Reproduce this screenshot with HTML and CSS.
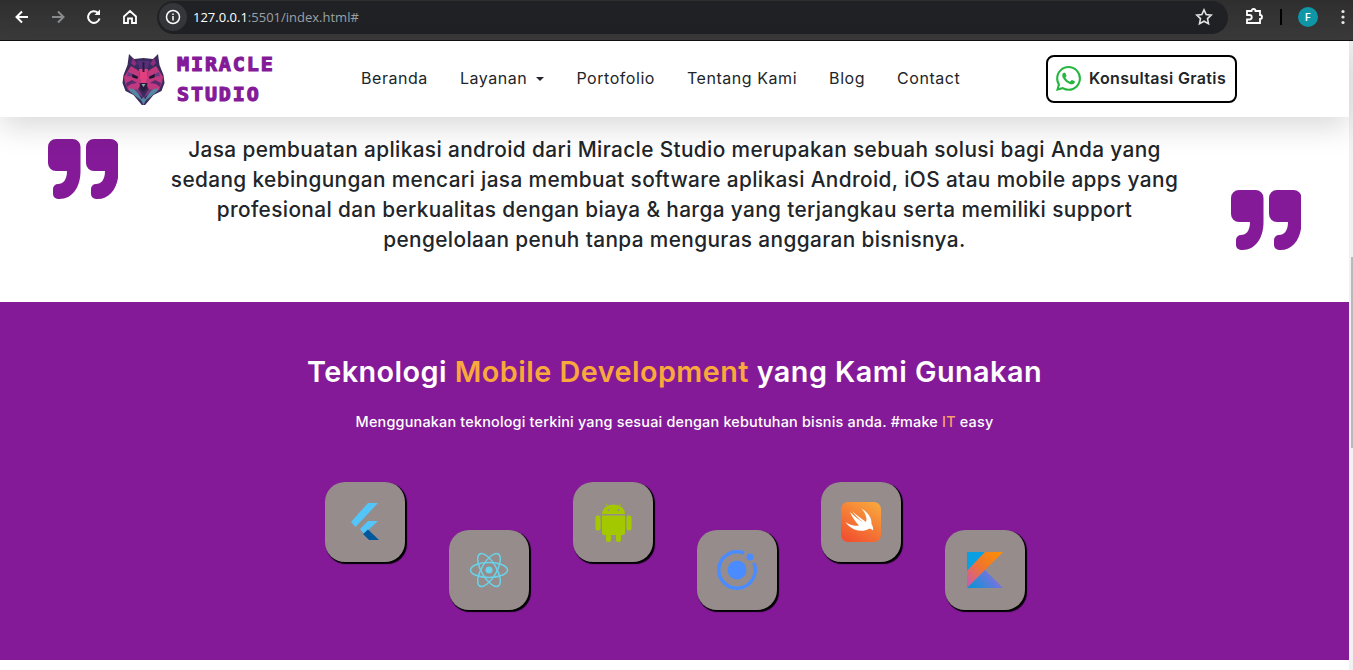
FILE: index.html
```html
<!DOCTYPE html>
<html lang="en">
<head>
    <meta charset="UTF-8">
    <meta name="viewport" content="width=device-width, initial-scale=1.0">
    <title>Miracle Studio</title>
    <link rel="stylesheet" href="styles.css">
</head>
<body>
    <!-- browser toolbar -->
    <div class="browser-bar">
        <svg class="tool" viewBox="0 0 20 20"><path d="M16 10H5M10 4.5 4.5 10l5.500 5.500" fill="none" stroke="#fff" stroke-width="2"/></svg>
        <svg class="tool" viewBox="0 0 20 20"><path d="M4 10h11M10 4.500 15.500 10 10 15.500" fill="none" stroke="#8a8b8d" stroke-width="2"/></svg>
        <svg class="tool" viewBox="0 0 20 20"><path d="M15.500 11.500A5.800 5.800 0 1 1 14 6" fill="none" stroke="#fff" stroke-width="2"/><path d="M16 2.500V8h-5.500z" fill="#fff"/></svg>
        <svg class="tool" viewBox="0 0 20 20"><path d="M4 9.500 10 4l6 5.500V16h-4v-4.500H8V16H4z" fill="none" stroke="#fff" stroke-width="1.800"/></svg>
        <div class="url-pill">
            <span class="info-btn"><svg viewBox="0 0 16 16" width="16" height="16"><circle cx="8" cy="8" r="6.500" fill="none" stroke="#fff" stroke-width="1.500"/><path d="M8 7v4.500M8 4.400v1.500" stroke="#fff" stroke-width="1.500"/></svg></span>
            <span class="url"><b>127.0.0.1</b>:5501/index.html#</span>
            <svg class="star" viewBox="0 0 20 20"><path d="m10 2.800 2.200 4.700 5 .6-3.700 3.500 1 5.100L10 14.200l-4.500 2.500 1-5.100L2.800 8.100l5-.6z" fill="none" stroke="#e3e3e3" stroke-width="1.600"/></svg>
        </div>
        <svg class="puzzle" viewBox="0 0 20 20"><path d="M3 5h4.500a2 2 0 0 1 4 0H16v4a2 2 0 0 1 0 4v4H3v-3.500h2.500a1.700 1.700 0 0 0 0-4.500H3z" transform="translate(0 -1)" fill="none" stroke="#fff" stroke-width="1.800"/></svg>
        <span class="divider"></span>
        <span class="avatar">F</span>
        <svg class="dots" viewBox="0 0 4 16"><circle cx="2" cy="2.500" r="1.600"/><circle cx="2" cy="8" r="1.600"/><circle cx="2" cy="13.500" r="1.600"/></svg>
    </div>

    <div class="viewport">
        <div class="page">
            <nav class="navbar">
                <a class="brand" href="#">
                    <svg class="wolf" viewBox="0 0 43 52">
                        <path d="M7 1l5 5 9.500-1L31 6l5-5 1.500 11 4 10 1 8-3 8-8 4-10 12-10-12-8-4-3-8 1-8 4-10z" fill="#3a2a5e"/>
                        <path d="M2 24l7-11 8 5 2 13-5 9-8-3-3-7z" fill="#c0397f"/>
                        <path d="M41 24l-7-11-8 5-2 13 5 9 8-3 3-7z" fill="#c0397f"/>
                        <path d="M4 30l6-3 5 3-6 1-4 3zM39 30l-6-3-5 3 6 1 4 3z" fill="#5b2a6e"/>
                        <path d="M6 19l7 3-1 2-7-1zM37 19l-7 3 1 2 7-1z" fill="#6b3a86"/>
                        <path d="M11 5l4 6-3 2-3-3zM32 5l-4 6 3 2 3-3z" fill="#8a2f7e"/>
                        <path d="M15 8h13l-3 8h-7z" fill="#56307c"/>
                        <path d="M17 16h9l-1.500 14h-6z" fill="#e0407f"/>
                        <path d="M20.500 9h2v10h-2z" fill="#2a1c3c"/>
                        <path d="M10 21l6 2.500-.5 2.500-5-1.500zM33 21l-6 2.500.5 2.500 5-1.500z" fill="#1f1530"/>
                        <path d="M7 35l7 2 7.500 12-8-6-6-5zM36 35l-7 2-7.500 12 8-6 6-5z" fill="#5488a2"/>
                        <path d="M12 36l5 1 4.500 8-5-4zM31 36l-5 1-4.500 8 5-4z" fill="#7a3a7e"/>
                        <path d="M17.500 30h8l-1 6-3 3-3-3z" fill="#2a1c3c"/>
                        <path d="M19.500 31h4l-2 3z" fill="#9aa3b5"/>
                        <path d="M21.500 52l-2.500-5 2.500-3 2.500 3z" fill="#5488a2"/>
                    </svg>
                    <span class="brand-name">MIRACLE<br>STUDIO</span>
                </a>
                <ul class="nav-links">
                    <li><a href="#">Beranda</a></li>
                    <li><a href="#">Layanan <span class="caret"></span></a></li>
                    <li><a href="#">Portofolio</a></li>
                    <li><a href="#">Tentang Kami</a></li>
                    <li><a href="#">Blog</a></li>
                    <li><a href="#">Contact</a></li>
                </ul>
                <a class="btn-consult" href="#">
                    <svg viewBox="0 0 24 24" width="25" height="25"><path fill="#25b63f" d="M17.472 14.382c-.297-.149-1.758-.867-2.030-.967-.273-.099-.471-.148-.67.150-.197.297-.767.966-.940 1.164-.173.199-.347.223-.644.075-.297-.150-1.255-.463-2.390-1.475-.883-.788-1.480-1.761-1.653-2.059-.173-.297-.018-.458.130-.606.134-.133.298-.347.446-.520.149-.174.198-.298.298-.497.099-.198.050-.371-.025-.520-.075-.149-.669-1.612-.916-2.207-.242-.579-.487-.500-.669-.510-.173-.008-.371-.010-.570-.010-.198 0-.520.074-.792.372-.272.297-1.040 1.016-1.040 2.479 0 1.462 1.065 2.875 1.213 3.074.149.198 2.096 3.200 5.077 4.487.709.306 1.262.489 1.694.625.712.227 1.360.195 1.871.118.571-.085 1.758-.719 2.006-1.413.248-.694.248-1.289.173-1.413-.074-.124-.272-.198-.570-.347m-5.421 7.403h-.004a9.870 9.870 0 01-5.031-1.378l-.361-.214-3.741.982.998-3.648-.235-.374a9.860 9.860 0 01-1.510-5.260c.001-5.450 4.436-9.884 9.888-9.884 2.640 0 5.122 1.030 6.988 2.898a9.825 9.825 0 012.893 6.994c-.003 5.450-4.437 9.884-9.885 9.884m8.413-18.297A11.815 11.815 0 0012.050 0C5.495 0 .160 5.335.157 11.892c0 2.096.547 4.142 1.588 5.945L.057 24l6.305-1.654a11.882 11.882 0 005.683 1.448h.005c6.554 0 11.890-5.335 11.893-11.893a11.821 11.821 0 00-3.480-8.413z"/></svg>
                    Konsultasi Gratis
                </a>
            </nav>

            <section class="quote">
                <svg class="quote-mark" viewBox="0 0 70 60"><use href="#quote-glyph"/><use href="#quote-glyph" x="38"/></svg>
                <p>Jasa pembuatan aplikasi android dari Miracle Studio merupakan sebuah solusi bagi Anda yang<br>
                sedang kebingungan mencari jasa membuat software aplikasi Android, iOS atau mobile apps yang<br>
                profesional dan berkualitas dengan biaya &amp; harga yang terjangkau serta memiliki support<br>
                pengelolaan penuh tanpa menguras anggaran bisnisnya.</p>
                <svg class="quote-mark quote-end" viewBox="0 0 70 60"><use href="#quote-glyph"/><use href="#quote-glyph" x="38"/></svg>
            </section>

            <section class="tech">
                <h2>Teknologi <span class="accent">Mobile Development</span> yang Kami Gunakan</h2>
                <p class="tech-sub">Menggunakan teknologi terkini yang sesuai dengan kebutuhan bisnis anda. #make <span class="it">IT</span> easy</p>
                <div class="tech-list">
                    <div class="tile">
                        <svg viewBox="0 0 40 40"><path d="M33 1H23L6 20l4.500 5z" fill="#54c5f8"/><path d="M33 19H23l-8 8 4 5z" fill="#54c5f8"/><path d="M18 32l5-4.500L34 38H24z" fill="#01579b"/></svg>
                    </div>
                    <div class="tile tile-low">
                        <svg viewBox="0 0 40 40"><g fill="none" stroke="#69d3ea" stroke-width="1.500"><ellipse cx="20" cy="20" rx="18.500" ry="7.500"/><ellipse cx="20" cy="20" rx="18.500" ry="7.500" transform="rotate(60 20 20)"/><ellipse cx="20" cy="20" rx="18.500" ry="7.500" transform="rotate(120 20 20)"/></g><circle cx="20" cy="20" r="3.500" fill="#69d3ea"/></svg>
                    </div>
                    <div class="tile">
                        <svg viewBox="0 0 40 40" fill="#a4c800"><path d="M9 12a11.500 9.500 0 0 1 23 0z"/><path d="M9 13.500h23V31a2 2 0 0 1-2 2H11a2 2 0 0 1-2-2z"/><rect x="2.500" y="13.500" width="5" height="15" rx="2.200"/><rect x="33.500" y="13.500" width="5" height="15" rx="2.200"/><rect x="13" y="30" width="5" height="10" rx="2"/><rect x="23" y="30" width="5" height="10" rx="2"/><path d="M13 1.500l2.500 4M28 1.500l-2.500 4" stroke="#a4c800"/><circle cx="15.500" cy="8" r="1" fill="#968c8c"/><circle cx="25.500" cy="8" r="1" fill="#968c8c"/></svg>
                    </div>
                    <div class="tile tile-low">
                        <svg viewBox="0 0 40 40"><circle cx="20" cy="20" r="9.500" fill="#4a8cff"/><path d="M27.100 3.200A18.200 18.200 0 1 0 36.800 12.900" fill="none" stroke="#4a8cff" stroke-width="3.500"/><circle cx="33" cy="7" r="3.600" fill="#4a8cff"/></svg>
                    </div>
                    <div class="tile">
                        <svg viewBox="0 0 40 40">
                            <defs>
                                <linearGradient id="swiftBg" x1="0.800" y1="0" x2="0.200" y2="1"><stop offset="0" stop-color="#f8a53c"/><stop offset="1" stop-color="#f1502f"/></linearGradient>
                                <linearGradient id="kotlinBand" x1="1" y1="0" x2="0" y2="1"><stop offset="0" stop-color="#ff9100"/><stop offset="0.500" stop-color="#f0752c"/><stop offset="1" stop-color="#c757bc"/></linearGradient>
                                <linearGradient id="kotlinLow" x1="0" y1="1" x2="1" y2="0.600"><stop offset="0" stop-color="#0095d5"/><stop offset="1" stop-color="#8a6fe0"/></linearGradient>
                            </defs>
                            <rect width="40" height="40" rx="7" fill="url(#swiftBg)"/>
                            <path d="M9 10c4 4 9 8 13 10.500C18 17 14 13 11 9c4 3.500 9 7.500 14 11 1.500-3.500-.5-9-4.500-13.500C27 10.500 31 16 30.500 22c1.500 2.500 2 5 1.500 6.500-1-1.500-3-2-4.500-1.500-3 2-9 2.500-14 .5C9.500 26 6.500 23 4.500 20c3.500 2.500 9 4.500 13.500 3.500C14.500 20 11 15 9 10z" fill="#fff"/>
                        </svg>
                    </div>
                    <div class="tile tile-low">
                        <svg viewBox="0 0 40 40"><path d="M2 2h18L2 21z" fill="#0a9fe0"/><path d="M20 2h18L2 38V21z" fill="url(#kotlinBand)"/><path d="M20 20l18 18H2z" fill="url(#kotlinLow)"/></svg>
                    </div>
                </div>
            </section>
            <div class="page-end"></div>
        </div>
        <div class="scroll-track"><div class="scroll-thumb"></div></div>
    </div>

    <svg class="sprites" width="0" height="0">
        <symbol id="quote-glyph" viewBox="0 0 32 60" width="32" height="60" overflow="visible">
            <path d="M8 0h16.500a8 8 0 0 1 8 8v24c0 16-8 28-21 28H10a5 5 0 0 1-5-5v-5a5 5 0 0 1 5-5c5 0 9-4 9-13H8a8 8 0 0 1-8-8V8a8 8 0 0 1 8-8z" fill="#841a98"/>
        </symbol>
    </svg>
</body>
</html>
```

FILE: styles.css
```css
* {
    box-sizing: border-box;
}
html, body {
    margin: 0;
    height: 670px;
    overflow: hidden;
}
body {
    font-family: Inter, 'Noto Sans', sans-serif;
    color: #212529;
    background-color: #fff;
}
a {
    color: inherit;
    text-decoration: none;
}
.sprites {
    display: block;
}

/* browser toolbar */
.browser-bar {
    height: 41px;
    display: flex;
    align-items: center;
    padding: 0 0 6px 12px;
    background: linear-gradient(#2e2e2e, #3b3b3b);
    border-bottom: 1px solid #111;
}
.tool {
    width: 20px;
    height: 20px;
    margin-right: 16px;
    flex: none;
}
.url-pill {
    width: 1071px;
    height: 33px;
    margin-left: 1px;
    display: flex;
    align-items: center;
    padding: 0 14px 0 0;
    border-radius: 17px;
    background-color: #202124;
}
.info-btn {
    width: 28px;
    height: 28px;
    margin-left: 2px;
    display: flex;
    align-items: center;
    justify-content: center;
    border-radius: 50%;
    background-color: #35363a;
}
.url {
    margin-left: 6px;
    font-family: 'Open Sans', sans-serif;
    font-size: 13px;
    color: #9aa0a6;
}
.url b {
    font-weight: 500;
    color: #fff;
}
.star {
    width: 20px;
    height: 20px;
    margin-left: auto;
}
.puzzle {
    width: 20px;
    height: 20px;
    margin-left: 16px;
}
.divider {
    width: 2px;
    height: 16px;
    margin-left: 16px;
    background-color: #000;
}
.avatar {
    width: 20px;
    height: 20px;
    margin-left: 16px;
    display: flex;
    align-items: center;
    justify-content: center;
    border-radius: 50%;
    background-color: #0f97a8;
    color: #fff;
    font-size: 10px;
    font-weight: 600;
}
.dots {
    width: 4px;
    height: 16px;
    margin-left: 23px;
    fill: #e8e8e8;
}

/* page */
.viewport {
    height: 629px;
    display: flex;
}
.page {
    flex: 1;
    min-width: 0;
    display: flex;
    flex-direction: column;
}
.scroll-track {
    width: 4px;
    background-color: #f1f1f1;
    padding: 216px 0 0 2px;
}
.scroll-thumb {
    height: 191px;
    background-color: #b9b9b9;
}

/* navbar */
.navbar {
    height: 76px;
    flex: none;
    position: relative;
    z-index: 2;
    display: flex;
    align-items: center;
    padding: 0 112px 0 122px;
    background-color: #fff;
    box-shadow: 0 10px 30px rgba(0, 0, 0, 0.15);
}
.brand {
    display: flex;
    align-items: center;
    gap: 12px;
    width: 239px;
}
.wolf {
    width: 43px;
    height: 52px;
    flex: none;
}
.brand-name {
    font-family: 'DejaVu Sans Mono', monospace;
    font-size: 20px;
    font-weight: 700;
    line-height: 30px;
    letter-spacing: 1.900px;
    color: #841a98;
    -webkit-text-stroke: 1.200px #841a98;
}
.nav-links {
    display: flex;
    gap: 32px;
    margin: 0 0 2px;
    padding: 0;
    list-style: none;
    font-size: 16px;
    letter-spacing: 0.550px;
}
.caret {
    display: inline-block;
    margin-left: 4px;
    vertical-align: 3px;
    border-top: 4.800px solid #212529;
    border-left: 4.800px solid transparent;
    border-right: 4.800px solid transparent;
}
.btn-consult {
    width: 191px;
    height: 48px;
    margin-left: auto;
    display: flex;
    align-items: center;
    gap: 8px;
    padding: 0 0 2px 8px;
    border: 2px solid #000;
    border-radius: 8px;
    font-size: 16px;
    font-weight: 600;
    letter-spacing: 0.350px;
}

/* quote */
.quote {
    height: 185px;
    flex: none;
    display: flex;
    justify-content: space-between;
    padding: 18px 48px 47px;
}
.quote p {
    margin: 0;
    font-size: 20.800px;
    font-weight: 500;
    line-height: 30px;
    letter-spacing: 0.380px;
    text-align: center;
}
.quote-mark {
    width: 70px;
    height: 60px;
    flex: none;
    margin-top: 4px;
}
.quote-end {
    align-self: flex-end;
    margin: 0 0 5px;
}

/* technologies */
.tech {
    height: 358px;
    flex: none;
    padding-top: 50px;
    background-color: #841a98;
    color: #fff;
    text-align: center;
}
.tech h2 {
    margin: 0;
    font-size: 28.800px;
    font-weight: 600;
    line-height: 40px;
    letter-spacing: 0.460px;
}
.accent {
    color: #f9a93b;
}
.tech-sub {
    margin: 20px 0 0;
    font-size: 14.400px;
    font-weight: 500;
    line-height: 20px;
    letter-spacing: 0.200px;
}
.it {
    color: #f9a06a;
}
.tech-list {
    display: flex;
    justify-content: center;
    gap: 44px;
    margin-top: 50px;
}
.tile {
    width: 80px;
    height: 80px;
    display: flex;
    align-items: center;
    justify-content: center;
    border-radius: 20px;
    background-color: #968c8c;
    box-shadow: 1.500px 1.500px 1px #000;
}
.tile svg {
    width: 40px;
    height: 40px;
}
.tile-low {
    margin-top: 48px;
}
.page-end {
    flex: 1;
    background-color: #fff;
}
```
